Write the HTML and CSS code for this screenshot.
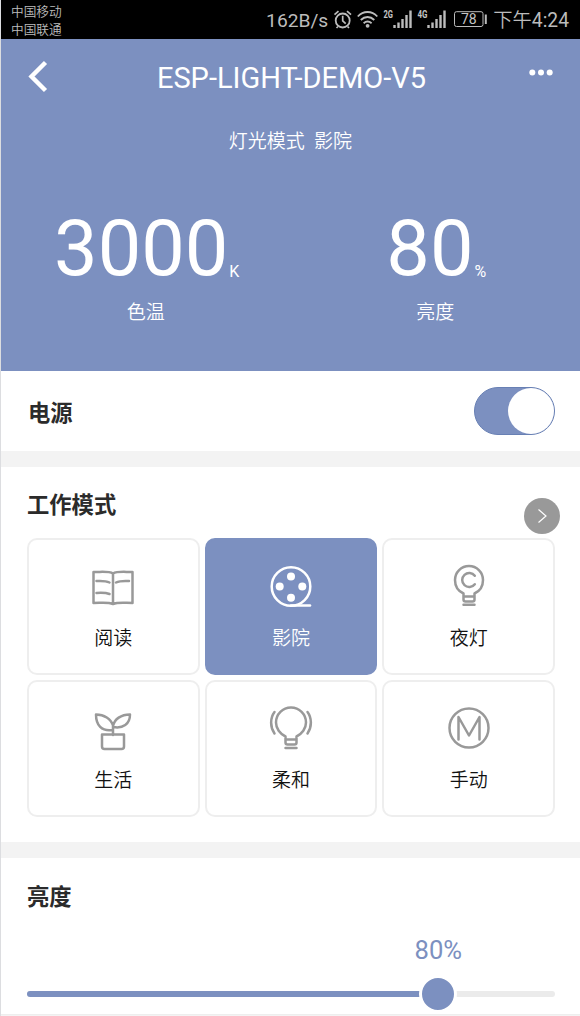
FILE: index.html
```html
<!DOCTYPE html>
<html lang="zh-CN">
<head>
<meta charset="utf-8">
<title>ESP-LIGHT-DEMO-V5</title>
<link rel="stylesheet" href="styles.css">
</head>
<body>
<div class="statusbar">
  <div class="carriers"><span>中国移动</span><span>中国联通</span></div>
  <div class="indicators">
    <span class="speed">162B/s</span>
    <svg class="status-icons" width="158" height="24" viewBox="330 8 158 24" fill="none" stroke="#bcbcbc">
      <circle cx="342.700" cy="20.500" r="7" stroke-width="1.800"/>
      <path d="M342.700 15.800v5l3 2.800M334.500 14.700l4-3.600M351 14.700l-4-3.600M338 26.500l-1.500 1.500M347.500 26.500l1.500 1.500" stroke-width="1.700"/>
      <path d="M357.800 16.500c5.500-6 14-6 19.500 0M360.800 20c4-4 9.500-4 13.500 0M363.600 23.300c2.500-2.200 5.500-2.200 8 0" stroke-width="1.800"/>
      <circle cx="367.600" cy="25.800" r="1.900" fill="#bcbcbc" stroke="none"/>
      <g stroke-width="2.400"><path d="M394.500 28v-3M398.500 28v-5.500M402.500 28v-9M406.500 28V15M410.500 28V10.500M428.500 28v-3M432.500 28v-5.500M436.500 28v-9M440.500 28V15M444.500 28V10.500"/></g>
      <rect x="454.500" y="11.700" width="28.500" height="14.800" rx="2" stroke-width="1"/>
      <path d="M485.800 14.500v9.500" stroke-width="2"/>
      <g class="status-label" fill="#c4c4c4" stroke="none">
        <text x="383.500" y="18" font-size="10.500" font-weight="700" textLength="9.500" lengthAdjust="spacingAndGlyphs">2G</text>
        <text x="417.500" y="18" font-size="10.500" font-weight="700" textLength="10" lengthAdjust="spacingAndGlyphs">4G</text>
        <text x="461" y="24" font-size="14">78</text>
      </g>
    </svg>
    <span class="clock">下午<span class="time">4:24</span></span>
  </div>
</div>

<header class="hero">
  <nav class="topbar">
    <svg width="20" height="32" viewBox="0 0 20 32"><path d="M18.500 1.500 4.500 15.500l14 14" fill="none" stroke="#fff" stroke-width="4.400"/></svg>
    <h1>ESP-LIGHT-DEMO-V5</h1>
    <svg class="more" width="24" height="8" viewBox="0 0 24 8" fill="#fff"><circle cx="3.300" cy="3.500" r="3"/><circle cx="12" cy="3.500" r="3"/><circle cx="20.700" cy="3.500" r="3"/></svg>
  </nav>
  <p class="mode-line">灯光模式&nbsp; 影院</p>
  <div class="stats">
    <div class="stat"><div class="value">3000<small>K</small></div><div class="caption">色温</div></div>
    <div class="stat"><div class="value">80<small>%</small></div><div class="caption">亮度</div></div>
  </div>
</header>

<section class="power">
  <h2>电源</h2>
  <div class="switch"><span class="knob"></span></div>
</section>

<section class="modes">
  <div class="modes-head">
    <h2>工作模式</h2>
    <div class="next"><svg width="12" height="16" viewBox="0 0 12 16"><path d="m2.500 1.500 7.500 6.500-7.500 6.500" fill="none" stroke="#fff" stroke-width="1.200"/></svg></div>
  </div>
  <div class="grid">
    <div class="card">
      <svg width="48" height="48" viewBox="0 0 48 48"><path d="M24 8.500C20 6 14 7 4.500 7v31c7.500 0 14.500-1 19.500 1 5-2 12-1 19.500-1V7c-9 0-15.500-1-19.500 1.500v30.500M7.500 16c5-.3 9-.5 13 1.500M7.500 28c5-.3 9-.5 13 1M27 17.500c4-2 8-1.800 13-1.500"/></svg>
      <span>阅读</span>
    </div>
    <div class="card active">
      <svg width="48" height="48" viewBox="0 0 48 48"><circle cx="24" cy="21.500" r="19.300"/><path d="M24 40.500h19"/><g class="dots"><circle cx="24" cy="11.500" r="4"/><circle cx="12.700" cy="21.500" r="4"/><circle cx="35.300" cy="21.500" r="4"/><circle cx="24" cy="32.800" r="4"/></g></svg>
      <span>影院</span>
    </div>
    <div class="card">
      <svg width="48" height="48" viewBox="0 0 48 48"><path d="M18.500 28.500C13 26 10 20.500 10 15a14 14 0 0 1 28 0c0 5.500-3 11-8.500 13.500v6q0 2-2 2h-7q-2 0-2-2zM18.500 31.500h11M18.500 39.700h11"/><path d="M29.800 10.800a7 7 0 1 0 0 8.400"/></svg>
      <span>夜灯</span>
    </div>
    <div class="card">
      <svg width="48" height="48" viewBox="0 0 48 48"><path d="M24 28V18.500C22 12 15 7.500 7 7.500 7 18 12.500 25 24 23M24 19c1.500-7 8-11.500 17-11.500C41 17 34 22 24 20M13 27.500h22v12q0 2.500-2.500 2.500h-17q-2.500 0-2.500-2.500z"/></svg>
      <span>生活</span>
    </div>
    <div class="card">
      <svg width="48" height="48" viewBox="0 0 48 48"><path d="M18.500 29.500C13 27 9 21.500 9 15.500a15 15 0 0 1 30 0c0 6-4 11.500-9.500 14v6q0 2-2 2h-7q-2 0-2-2zM18.500 32.500h11M18.500 41h11M7.500 5C3 11 3 20 7.500 26.500M40.500 5c4.500 6 4.500 15 0 21.500"/></svg>
      <span>柔和</span>
    </div>
    <div class="card">
      <svg width="48" height="48" viewBox="0 0 48 48"><circle cx="24" cy="21" r="19.500"/><path d="M13.500 32.500V10L24 28.500 34.500 10v22.500"/></svg>
      <span>手动</span>
    </div>
  </div>
</section>

<section class="brightness">
  <h2>亮度</h2>
  <div class="slider">
    <div class="track"><div class="fill" style="width:77.900%"></div></div>
    <div class="handle" style="left:77.900%"><span class="bubble">80%</span></div>
  </div>
</section>
</body>
</html>
```
FILE: styles.css
```css
* { box-sizing: border-box; }
body {
  margin: 0;
  width: 580px;
  height: 1016px;
  overflow: hidden;
  background: #f3f3f3;
  border-left: 1px solid #dcdde0;
  font-family: Roboto, "Noto Sans CJK SC", sans-serif;
  color: #2b2b2b;
}
h1, h2, p { margin: 0; }
svg { display: block; flex: none; overflow: visible; }

.statusbar {
  height: 39px;
  padding-left: 10px;
  background: #000;
  color: #bcbcbc;
  display: flex;
  justify-content: space-between;
}
.carriers {
  display: flex;
  flex-direction: column;
  padding-top: 3px;
  font-size: 12.700px;
  line-height: 17.500px;
  font-weight: 350;
}
.indicators {
  display: flex;
  align-items: center;
  padding: 1px 11px 0 0;
  white-space: nowrap;
}
.speed { font-size: 19.200px; margin-right: 2px; }
.clock { font-size: 19.300px; font-weight: 350; margin: -2px 0 0 5px; }
.time { font-weight: 400; }
.status-label { font-family: Roboto, sans-serif; }

.hero {
  height: 331.600px;
  background: #7c90c0;
  color: #fff;
}
.topbar {
  height: 76px;
  display: flex;
  align-items: center;
  justify-content: space-between;
  padding: 0 28px 0 26px;
}
.topbar h1 { font-size: 29px; font-weight: 400; line-height: 34px; padding: 2px 0 0 7px; }
.more { margin: -9px -1px 0 0; }
.mode-line {
  padding-top: 13px;
  line-height: 28px;
  font-size: 19px;
  font-weight: 350;
  text-align: center;
}
.stats { display: grid; grid-template-columns: 1fr 1fr; padding-top: 51px; }
.stat { text-align: center; }
.value { height: 84px; font-size: 77.500px; line-height: 84px; padding-left: 2px; }
.value small { position: relative; top: 2px; font-size: 16px; line-height: 1; margin-left: 1px; }
.caption { font-size: 19px; line-height: 28px; font-weight: 350; margin-top: 8px; }

section { background: #fff; padding: 0 24px 0 26px; }
h2 { font-size: 22.300px; line-height: 32px; font-weight: 700; }
.power { height: 80.400px; display: flex; align-items: center; justify-content: space-between; }
.power h2 { padding: 4px 0 0 1px; }
.switch {
  width: 81px;
  height: 48px;
  margin-right: 1px;
  border-radius: 24px;
  background: #7c90c0;
  border: 1px solid #6880b4;
  display: flex;
  justify-content: flex-end;
  align-items: center;
}
.knob { width: 46px; height: 46px; border-radius: 50%; background: #fff; }

.modes { margin-top: 16px; height: 375.500px; }
.modes-head { height: 71px; padding-top: 22px; display: flex; justify-content: space-between; align-items: flex-start; }
.next {
  width: 36px;
  height: 36px;
  margin: 9px -4px 0 0;
  border-radius: 50%;
  background: #999;
  display: flex;
  align-items: center;
  justify-content: center;
}
.grid {
  display: grid;
  grid-template-columns: repeat(3, 1fr);
  grid-auto-rows: 137px;
  gap: 5px;
  width: 528px;
}
.card {
  border: 2px solid #eee;
  border-radius: 10px;
  display: flex;
  flex-direction: column;
  align-items: center;
  padding-top: 25px;
  font-size: 19px;
  line-height: 28px;
  font-weight: 350;
  color: #111;
}
.card svg {
  fill: none;
  stroke: #999;
  stroke-width: 2.500px;
  stroke-linecap: round;
  stroke-linejoin: round;
  margin-bottom: 12px;
}
.active { background: #7c90c0; border-color: #7c90c0; color: #fff; }
.active svg { stroke: #fff; }
.active .dots { fill: #fff; stroke: none; }

.brightness { margin-top: 16px; height: 156.500px; padding-top: 23px; border-bottom: 1px solid #eee; }
.slider { position: relative; width: 528px; margin-top: 78px; }
.track { height: 6px; border-radius: 3px; background: #ebebeb; overflow: hidden; }
.fill { height: 6px; background: #7c90c0; }
.handle {
  position: absolute;
  top: -16px;
  width: 38px;
  height: 38px;
  margin-left: -19px;
  border: 3px solid #fff;
  border-radius: 50%;
  background: #7c90c0;
}
.bubble {
  position: absolute;
  left: 50%;
  top: -44px;
  transform: translateX(-50%);
  color: #7c90c0;
  font-size: 25.600px;
  line-height: 32px;
  font-weight: 400;
}
```
